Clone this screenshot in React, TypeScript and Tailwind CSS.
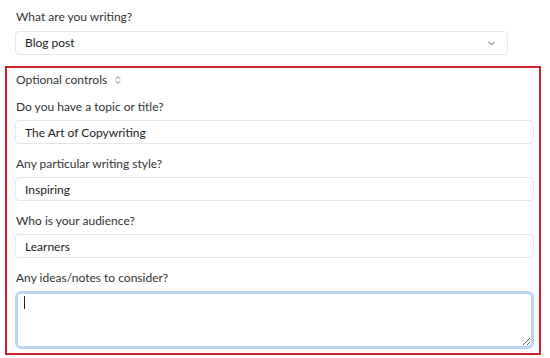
import { ChevronDown, ChevronsUpDown } from "lucide-react";

const fields = [
  { label: "Do you have a topic or title?", value: "The Art of Copywriting" },
  { label: "Any particular writing style?", value: "Inspiring" },
  { label: "Who is your audience?", value: "Learners" },
];

export default function App() {
  return (
    <div
      className="w-[550px] h-[358px] bg-white text-[12px] text-[#333] overflow-hidden"
      style={{ fontFamily: 'Lato, "Noto Sans", sans-serif' }}
    >
      {/* Writing type */}
      <div className="pl-[16px] pt-[8px]">
        <div className="h-[18px] leading-[18px] mb-[5px]">What are you writing?</div>
        <div className="-ml-px w-[493px] h-[24px] flex items-center justify-between border border-[#e6e6e6] rounded-[4px] pl-[9px] pr-[10px] text-[#222]">
          <span>Blog post</span>
          <ChevronDown className="w-[11px] h-[11px] text-[#444]" strokeWidth={2} />
        </div>
      </div>

      {/* Optional controls */}
      <div className="ml-[5px] mt-[11px] w-[536px] h-[289px] border-2 border-[#d0202a] pl-[8px] pr-[5px] pt-[3px]">
        <div className="pl-px h-[18px] leading-[18px] flex items-center gap-[6px]">
          <span>Optional controls</span>
          <ChevronsUpDown className="w-[10px] h-[10px] text-[#666]" strokeWidth={2} />
        </div>

        <div className="flex flex-col gap-[11px] mt-[9px]">
          {fields.map((f) => (
            <div key={f.label}>
              <div className="pl-px h-[18px] leading-[18px] mb-[4px]">{f.label}</div>
              <input
                readOnly
                value={f.value}
                className="w-[519px] h-[24px] border border-[#e6e6e6] rounded-[4px] px-[9px] text-[#222] outline-none"
              />
            </div>
          ))}
          <div>
            <div className="pl-px h-[18px] leading-[18px] mb-[4px]">Any ideas/notes to consider?</div>
            <div className="relative w-[519px] h-[58px]">
              <textarea
                readOnly
                className="w-full h-full border-[3px] border-[#bcd6f2] rounded-[6px] outline-none block"
              />
              <div className="absolute left-[9px] top-[5px] w-px h-[13px] bg-[#222]" />
            </div>
          </div>
        </div>
      </div>
    </div>
  );
}
